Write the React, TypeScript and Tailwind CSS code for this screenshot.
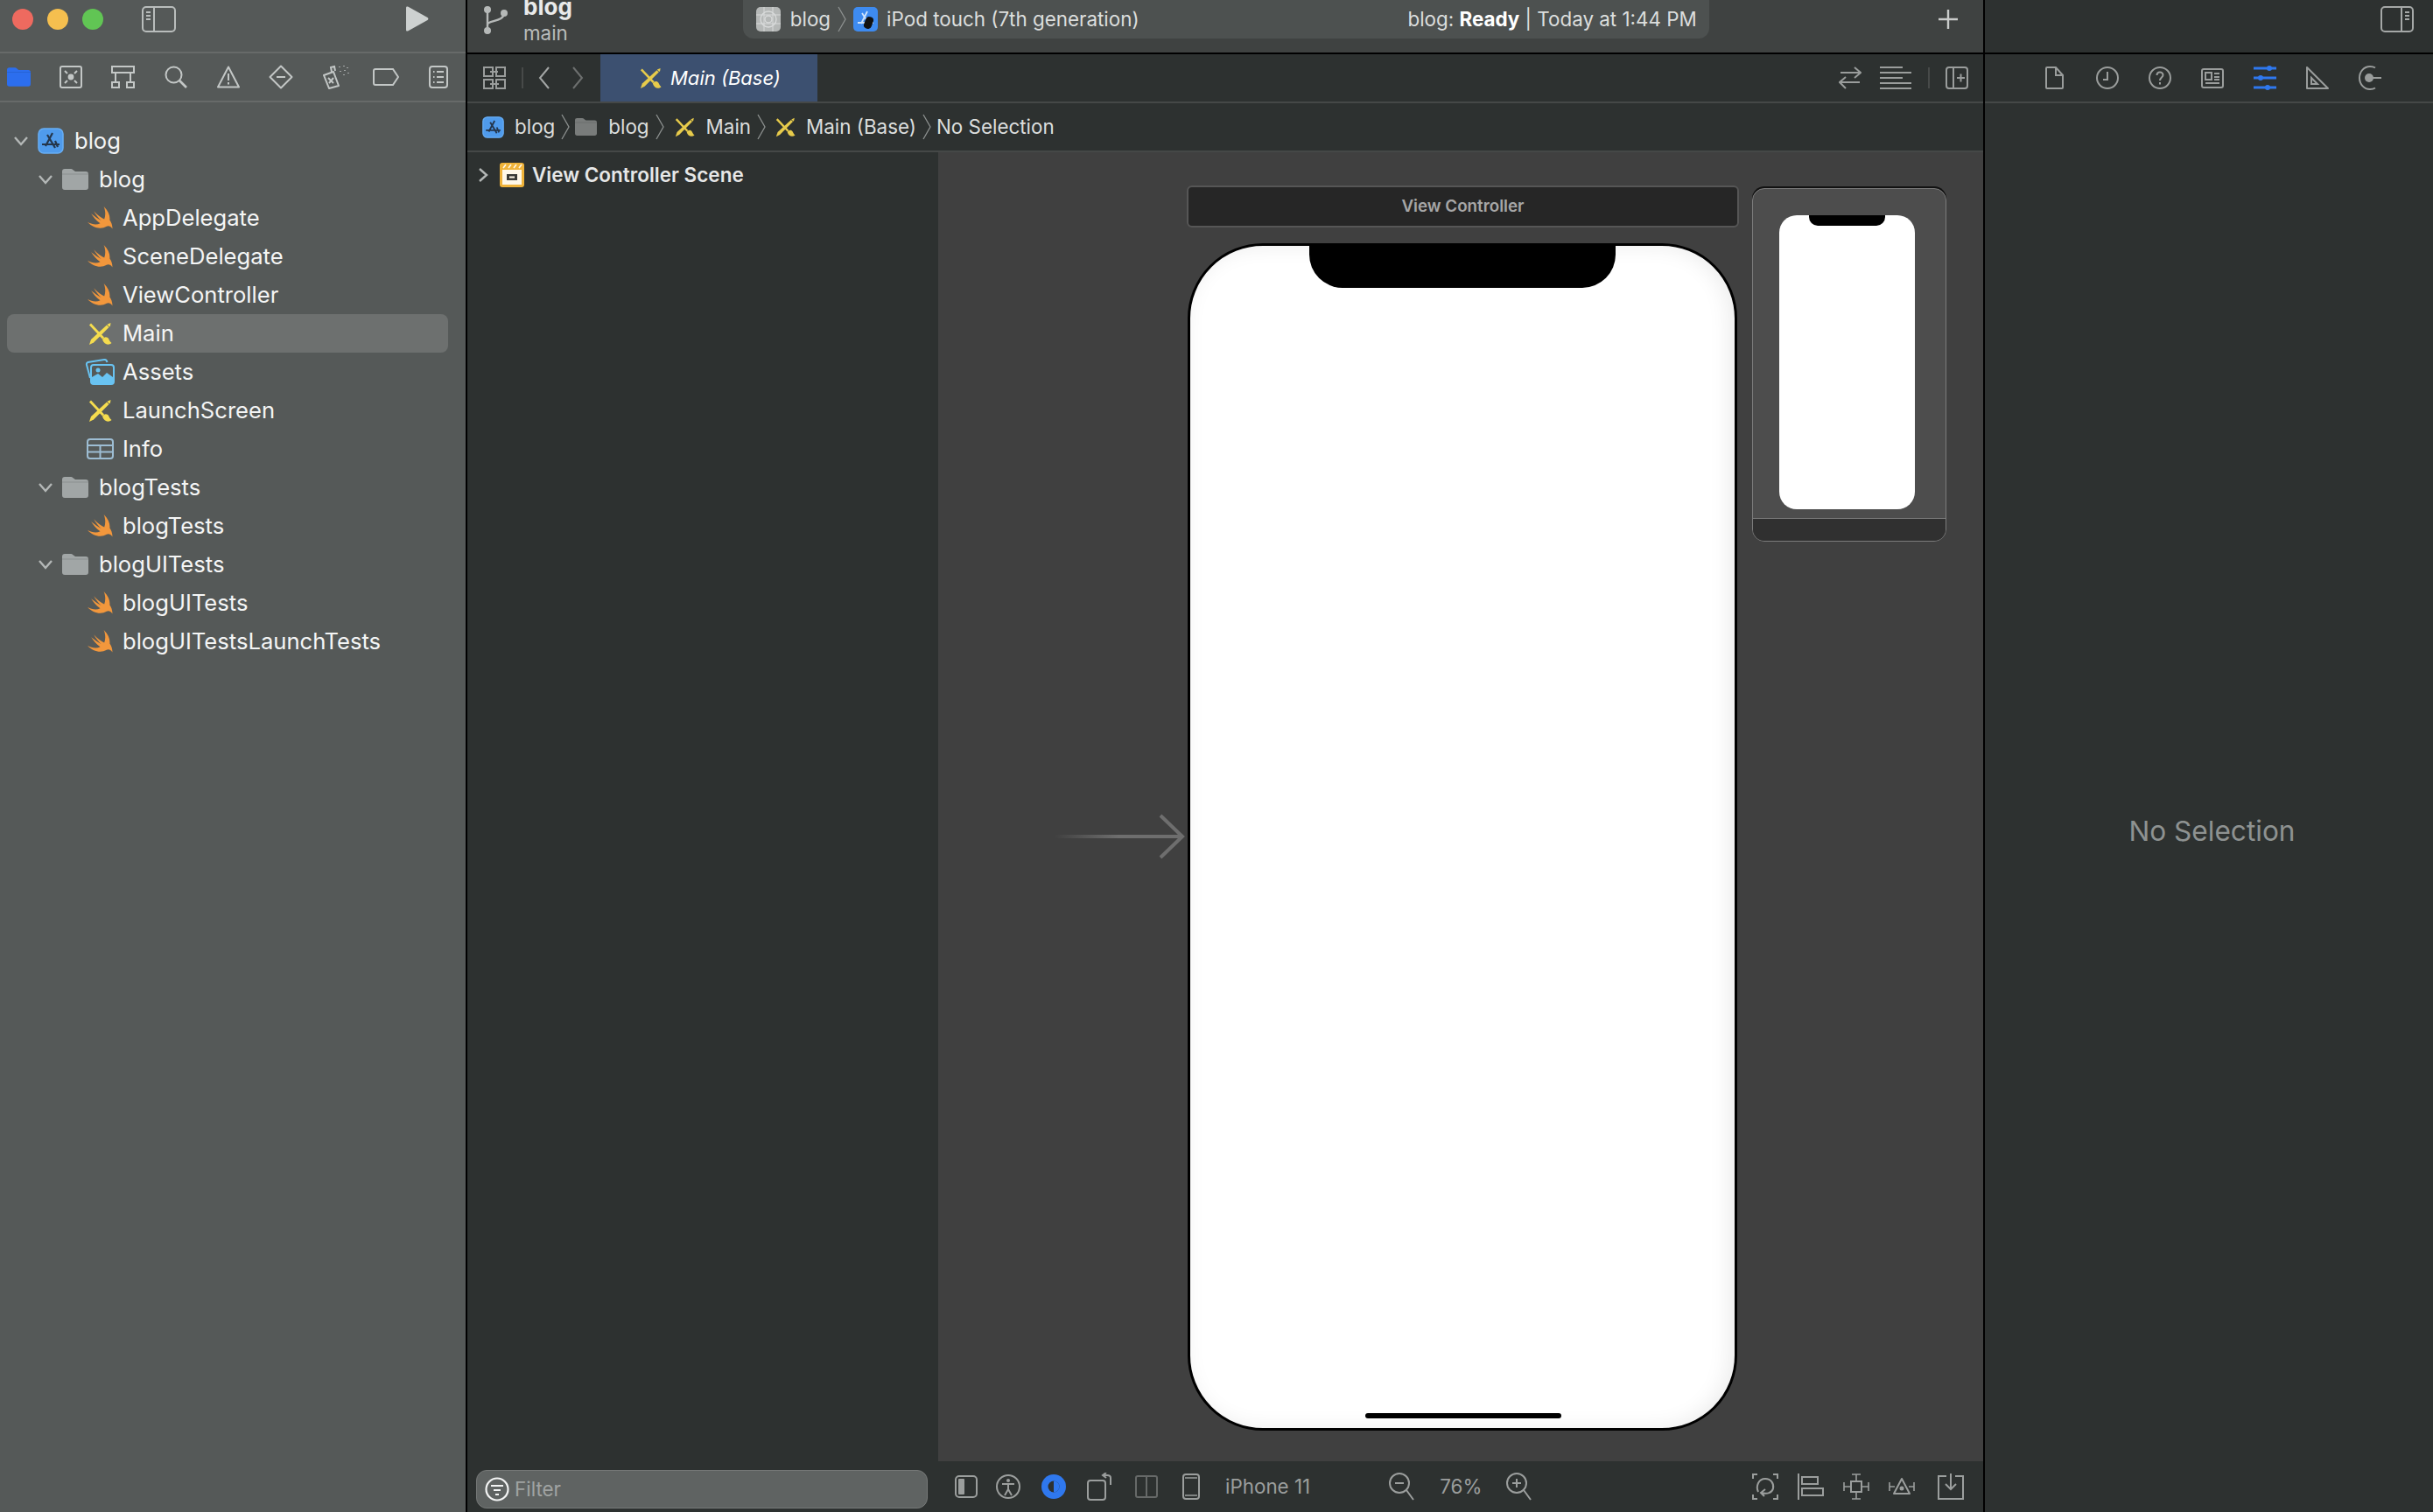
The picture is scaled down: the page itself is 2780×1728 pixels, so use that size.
import type { ReactNode } from "react";

function Ic({ w, h, children, className = "" }: { w: number; h: number; children: ReactNode; className?: string }) {
  return (
    <svg width={w} height={h} viewBox={`0 0 ${w} ${h}`} fill="none" stroke="currentColor" strokeWidth={2} className={`shrink-0 ${className}`}>
      {children}
    </svg>
  );
}

const SwiftIcon = () => (
  <svg width={29} height={26} viewBox="0 0 28 25" className="shrink-0">
    <path
      fill="#f2973c"
      d="M18 0C23 5 25 10 24.5 15C26 17 27.5 20 27.5 24.5C25.5 21.5 23 21 21 22C15 25.5 6 24 0 17C5 20 10 20.5 14 18.5C9.5 15.5 6.5 11.5 4 8C8 11 12 14 15 15.5C12 12.5 9 9 7 5C11 9.5 15 12.5 18.5 14C20 10 20 5 18 0Z"
    />
  </svg>
);

const BoardIcon = ({ color = "#f5dc4e", size = 27 }: { color?: string; size?: number }) => (
  <svg width={size} height={size} viewBox="0 0 27 27" className="shrink-0">
    <path d="M1 26L3 20L21 3.500L23.500 6L6 23.500Z" fill={color} />
    <path d="M22 2.500L25.500 1L25 4.500L24 5.500L21.500 3Z" fill={color} />
    <path d="M2 2.500L17 18.500" stroke={color} strokeWidth="2.800" />
    <path d="M16 20C18 16 22 17 23 19C24 21 25 23 26.500 24C23 27 18 26 16 20Z" fill={color} />
  </svg>
);

const AppIcon = ({ size = 30 }: { size?: number }) => (
  <svg width={size} height={size} viewBox="0 0 30 30" className="shrink-0">
    <rect x="1" y="1" width="28" height="28" rx="6" fill="#4f9bec" stroke="#67aef5" strokeWidth="1.500" />
    <path d="M11 8L20 23M17 6L9 21M5 19H25M20 15L23 22" stroke="#24364c" strokeWidth="2.200" fill="none" />
  </svg>
);

const FolderIcon = ({ color = "#a1a6a6", w = 30, h = 24 }: { color?: string; w?: number; h?: number }) => (
  <svg width={w} height={h} viewBox="0 0 30 24" className="shrink-0">
    <path
      fill={color}
      d="M0 3C0 1 1 0 3 0H10C12 0 13 2 15 3H27C29 3 30 4 30 6V21C30 23 29 24 27 24H3C1 24 0 23 0 21Z"
    />
    <path d="M0 6H30" stroke="#00000020" strokeWidth="1" />
  </svg>
);

const AssetsIcon = () => (
  <svg width={34} height={30} viewBox="0 0 34 30" fill="none" className="shrink-0">
    <path d="M6 22L2 7C1.600 5.500 2.400 4.500 3.500 4L22 1C24 .8 25 2 25.500 4" stroke="#69c3f2" strokeWidth="2" />
    <rect x="7" y="7" width="26" height="22" rx="3" stroke="#69c3f2" strokeWidth="2" />
    <path d="M8 28V21L15 17L20 21L25 16L32 21V28Z" fill="#69c3f2" />
    <circle cx="15" cy="13" r="2.500" fill="#69c3f2" />
  </svg>
);

const TableIcon = () => (
  <svg width={31} height={24} viewBox="0 0 31 24" fill="none" stroke="#9dbdd3" strokeWidth="2" className="shrink-0">
    <rect x="1" y="1" width="29" height="22" rx="3" />
    <path d="M1 8H30M1 15.500H30M15.500 8V23" />
  </svg>
);

const Chevron = ({ open }: { open: boolean }) => (
  <svg width={18} height={12} viewBox="0 0 18 12" fill="none" stroke="#b4b8b7" strokeWidth="2.400" className={`shrink-0 ${open ? "" : "-rotate-90"}`}>
    <path d="M2 2L9 10L16 2" />
  </svg>
);

const Crumb = () => (
  <svg width={12} height={30} viewBox="0 0 12 30" fill="none" stroke="#8d9190" strokeWidth="1.300" className="shrink-0">
    <path d="M2 1L10 15L2 29" />
  </svg>
);

type TreeRow = { label: string; level: 0 | 1 | 2; icon: ReactNode; selected?: boolean };

const tree: TreeRow[] = [
  { label: "blog", level: 0, icon: <AppIcon /> },
  { label: "blog", level: 1, icon: <FolderIcon /> },
  { label: "AppDelegate", level: 2, icon: <SwiftIcon /> },
  { label: "SceneDelegate", level: 2, icon: <SwiftIcon /> },
  { label: "ViewController", level: 2, icon: <SwiftIcon /> },
  { label: "Main", level: 2, icon: <BoardIcon />, selected: true },
  { label: "Assets", level: 2, icon: <AssetsIcon /> },
  { label: "LaunchScreen", level: 2, icon: <BoardIcon /> },
  { label: "Info", level: 2, icon: <TableIcon /> },
  { label: "blogTests", level: 1, icon: <FolderIcon /> },
  { label: "blogTests", level: 2, icon: <SwiftIcon /> },
  { label: "blogUITests", level: 1, icon: <FolderIcon /> },
  { label: "blogUITests", level: 2, icon: <SwiftIcon /> },
  { label: "blogUITestsLaunchTests", level: 2, icon: <SwiftIcon /> },
];

function Row({ row }: { row: TreeRow }) {
  return (
    <div className={`flex h-[44px] items-center rounded-lg ${row.selected ? "mx-[8px] w-[504px] bg-[#6d706f] pl-[90px]" : "w-[520px]"} ${
      row.selected ? "" : row.level === 2 ? "pl-[98px]" : row.level === 1 ? "pl-[43px]" : "pl-[15px]"
    }`}>
      {row.level < 2 && <Chevron open />}
      <span className={`flex h-[30px] items-center justify-center ${row.level === 2 ? "w-[32px]" : "ml-[10px] w-[30px]"}`}>
        {row.icon}
      </span>
      <span className={`text-[25.6px] leading-none text-[#f4f5f5] ${row.level === 2 ? "ml-[10px]" : "ml-[12px]"}`}>
        {row.label}
      </span>
    </div>
  );
}

const navIcons: ReactNode[] = [
  <FolderIcon color="#2c6eee" w={27} h={22} />,
  <Ic w={26} h={26}>
    <rect x="1" y="1" width="24" height="24" rx="2" />
    <circle cx="13" cy="13" r="3.400" fill="currentColor" stroke="none" />
    <path d="M6 6L9 9M20 6L17 9M6 20L9 17M20 20L17 17" />
  </Ic>,
  <Ic w={28} h={26}>
    <rect x="1" y="1" width="25" height="7" />
    <rect x="1" y="19" width="8" height="6" />
    <rect x="18" y="19" width="8" height="6" />
    <path d="M5 8V19M22 8V19" />
  </Ic>,
  <Ic w={26} h={26}>
    <circle cx="10.500" cy="10.500" r="9" />
    <path d="M17 17L25 25" strokeWidth="2.600" />
  </Ic>,
  <Ic w={26} h={26}>
    <path d="M13 1.500L25 24.500H1Z" strokeLinejoin="round" />
    <path d="M13 9V17M13 19V21.500" />
  </Ic>,
  <Ic w={28} h={28}>
    <path d="M14 1.500L26.500 14L14 26.500L1.500 14Z" strokeLinejoin="round" />
    <path d="M9 14H19" />
  </Ic>,
  <Ic w={32} h={28} className="translate-x-[3px]">
    <path d="M2 12L13 8L19 24L8 27Z" strokeLinejoin="round" />
    <path d="M11 8L10 3L14 2L15 7M7 15L13 21M13 15L8 21" />
    <path d="M20 2V3M25 1V2M29 3V4M21 7V8M26 6V7M30 9V10M25 11V12" strokeWidth="1.400" />
  </Ic>,
  <Ic w={30} h={20}>
    <path d="M3 1H23L29 10L23 19H3C1.500 19 1 18 1 17V3C1 2 1.500 1 3 1Z" />
  </Ic>,
  <Ic w={22} h={26}>
    <rect x="1" y="1" width="20" height="24" rx="3" />
    <path d="M5 7H6.500M9 7H17M5 13H6.500M9 13H17M5 19H6.500M9 19H17" />
  </Ic>,
];

const inspectorIcons: ReactNode[] = [
  <Ic w={22} h={26}>
    <path d="M2 1H12L20 10V24C20 24.500 19.500 25 19 25H2C1.500 25 1 24.500 1 24V2C1 1.500 1.500 1 2 1Z" />
    <path d="M12 1V10H20" />
  </Ic>,
  <Ic w={26} h={26}>
    <circle cx="13" cy="13" r="12" />
    <path d="M13 6V15H8" />
  </Ic>,
  <Ic w={26} h={26}>
    <circle cx="13" cy="13" r="12" />
    <path d="M9.500 10C9.500 7.500 11 6.500 13 6.500C15 6.500 16.500 8 16.500 9.700C16.500 12.500 13 12.500 13 16M13 18V20.500" />
  </Ic>,
  <Ic w={26} h={26}>
    <rect x="1" y="3" width="24" height="21" rx="2" />
    <rect x="5" y="7" width="7" height="8" />
    <path d="M15 8H21M15 12H21M15 15H21M5 19H21" />
  </Ic>,
  <Ic w={28} h={28} className="text-[#2f78ee]">
    <path d="M1 3H27M1 14H27M1 25H27" strokeWidth="3" />
    <circle cx="19" cy="3" r="3" fill="currentColor" stroke="none" />
    <circle cx="9" cy="14" r="3" fill="currentColor" stroke="none" />
    <circle cx="17" cy="25" r="3" fill="currentColor" stroke="none" />
  </Ic>,
  <Ic w={26} h={26}>
    <path d="M1 1V25H25Z" strokeLinejoin="round" />
    <path d="M6 13V20H13Z" />
  </Ic>,
  <Ic w={28} h={28}>
    <path d="M20 2.500C18.500 1.500 16 1 14 1C7 1 2 7 2 14C2 21 7 27 14 27C16 27 18.500 26.500 20 25.500" />
    <circle cx="13" cy="14" r="5" fill="currentColor" stroke="none" />
    <path d="M15 14H27" />
  </Ic>,
];

function App() {
  return (
    <div className="flex h-[1728px] w-[2780px] overflow-hidden bg-black font-['Inter',sans-serif]">
      {/* Navigator */}
      <aside className="flex w-[534px] shrink-0 flex-col border-r-2 border-black bg-[#555958]">
        <div className="flex h-[61px] items-start border-b-2 border-[#676a69] pl-[14px] pt-[10px]">
          <span className="h-[24px] w-[24px] rounded-full bg-[#ee6a5f]" />
          <span className="ml-[16px] h-[24px] w-[24px] rounded-full bg-[#f5bf4f]" />
          <span className="ml-[16px] h-[24px] w-[24px] rounded-full bg-[#61c554]" />
          <Ic w={40} h={30} className="ml-[44px] -mt-[3px] text-[#b9bdbc]">
            <rect x="1" y="1" width="37" height="28" rx="4" />
            <path d="M14 1V29M5 7H10M5 11H10M5 15H10" />
          </Ic>
          <svg width={27} height={29} viewBox="0 0 27 29" className="ml-[261px] -mt-[3px]">
            <path d="M1 2C1 .5 2 0 3.500 .8L25.500 13C26.700 13.800 26.700 15.200 25.500 16L3.500 28.200C2 29 1 28.500 1 27Z" fill="#cdd1d0" />
          </svg>
        </div>
        <div className="flex h-[56px] items-center border-b-2 border-[#676a69] text-[#c3c7c6]">
          {navIcons.map((icon, i) => (
            <span key={i} className="flex w-[60px] shrink-0 -translate-x-[9px] items-center justify-center">
              {icon}
            </span>
          ))}
        </div>
        <div className="pt-[22px]">
          {tree.map((row, i) => (
            <Row key={i} row={row} />
          ))}
        </div>
      </aside>

      {/* Editor */}
      <main className="flex min-w-0 flex-1 flex-col">
        <div className="flex h-[60px] shrink-0 items-start bg-[#3f4241]">
          <Ic w={28} h={34} className="ml-[18px] mt-[6px] text-[#b6b9b8]">
            <circle cx="5" cy="5" r="3" fill="currentColor" />
            <circle cx="5" cy="29" r="3" fill="currentColor" />
            <circle cx="24" cy="9" r="3" fill="currentColor" />
            <path d="M5 5V29M5 22C5 17 24 19 24 9" strokeWidth="2.400" />
          </Ic>
          <div className="ml-[18px] -mt-[9px] flex flex-col">
            <span className="text-[26px] font-bold leading-[34px] text-[#e9eaea]">blog</span>
            <span className="text-[22.4px] leading-[25px] text-[#b9bcbb]">main</span>
          </div>
          <div className="ml-[195px] flex h-[44px] w-[1104px] items-center rounded-b-xl bg-[#4d5150] pl-[15px] text-[22.4px] text-[#dcdedd]">
            <svg width={28} height={28} viewBox="0 0 28 28" className="shrink-0">
              <rect width="28" height="28" rx="5" fill="#b5b8b7" />
              <circle cx="14" cy="14" r="9" fill="none" stroke="#d8dada" strokeWidth="1.400" />
              <circle cx="14" cy="14" r="4" fill="none" stroke="#d8dada" strokeWidth="1.400" />
              <path d="M0 9H28M0 19H28M9 0V28M19 0V28" stroke="#d8dada" strokeWidth="1" />
            </svg>
            <span className="ml-[11px]">blog</span>
            <span className="ml-[7px]"><Crumb /></span>
            <span className="relative ml-[7px] flex h-[28px] w-[28px] items-center justify-center">
              <svg width={28} height={28} viewBox="0 0 28 28">
                <rect width="28" height="28" rx="5" fill="#3e8bf0" />
                <path d="M10 7L19 21M16 5L9 19M5 18H23" stroke="#cfe3fb" strokeWidth="1.800" fill="none" />
              </svg>
              <span className="absolute left-[13px] top-[11px] h-[14px] w-[9px] rotate-[20deg] rounded-sm bg-[#111]" />
            </span>
            <span className="ml-[10px] whitespace-nowrap">iPod touch (7th generation)</span>
            <span className="ml-auto mr-[14px] whitespace-nowrap">
              blog: <b className="font-bold text-white">Ready</b> | Today at 1:44 PM
            </span>
          </div>
          <svg width={24} height={24} viewBox="0 0 24 24" fill="none" stroke="#c9cbca" strokeWidth="2.400" className="ml-[261px] mt-[10px]">
            <path d="M12 1V23M1 12H23" />
          </svg>
        </div>
        <div className="h-[2px] shrink-0 bg-black" />

        <div className="flex h-[54px] shrink-0 items-center bg-[#2d3130]">
          <Ic w={26} h={26} className="ml-[18px] text-[#9a9d9c]">
            <path d="M1 1H11V11H1ZM15 1H25V11H15ZM1 15H11V25H1ZM15 15H25V25H15Z" />
            <path d="M8 6H17M18 20H8" />
          </Ic>
          <span className="ml-[18px] h-[24px] w-[2px] bg-[#474a49]" />
          <svg width={14} height={26} viewBox="0 0 14 26" fill="none" stroke="#a3a6a5" strokeWidth="2" className="ml-[17px]">
            <path d="M12 1L2 13L12 25" />
          </svg>
          <svg width={14} height={26} viewBox="0 0 14 26" fill="none" stroke="#6d706f" strokeWidth="2" className="ml-[24px]">
            <path d="M2 1L12 13L2 25" />
          </svg>
          <div className="ml-[19px] flex h-full w-[248px] items-center bg-[#3c5070] pl-[45px]">
            <BoardIcon color="#e7cb4b" size={25} />
            <span className="ml-[10px] whitespace-nowrap text-[22px] italic leading-none text-white">Main (Base)</span>
          </div>
          <Ic w={26} h={26} className="ml-auto text-[#9a9d9c]">
            <path d="M2 7H25M18 1L25 7L18 13M24 18H1M8 12L1 18L8 25" />
          </Ic>
          <Ic w={36} h={26} className="ml-[21px] text-[#9a9d9c]">
            <path d="M0 1H26M0 7H36M0 13H26M0 19H36M0 25H36" />
          </Ic>
          <span className="ml-[19px] h-[24px] w-[2px] bg-[#474a49]" />
          <Ic w={26} h={26} className="ml-[18px] mr-[17px] text-[#9a9d9c]">
            <rect x="1" y="1" width="24" height="24" rx="3" />
            <path d="M9 1V25M13 13H22M17.500 8.500V17.500" />
          </Ic>
        </div>
        <div className="h-[2px] shrink-0 bg-[#454847]" />

        <div className="flex h-[54px] shrink-0 items-center whitespace-nowrap bg-[#2d3130] pl-[17px] text-[22.4px] text-[#dcdedd]">
          <AppIcon size={25} />
          <span className="ml-[12px]">blog</span>
          <span className="ml-[6px]"><Crumb /></span>
          <span className="ml-[5px]"><FolderIcon color="#797c7b" w={25} h={20} /></span>
          <span className="ml-[13px]">blog</span>
          <span className="ml-[6px]"><Crumb /></span>
          <span className="ml-[11px]"><BoardIcon color="#e7cb4b" size={23} /></span>
          <span className="ml-[13px]">Main</span>
          <span className="ml-[6px]"><Crumb /></span>
          <span className="ml-[10px]"><BoardIcon color="#e7cb4b" size={23} /></span>
          <span className="ml-[12px]">Main (Base)</span>
          <span className="ml-[6px]"><Crumb /></span>
          <span className="ml-[5px]">No Selection</span>
        </div>
        <div className="h-[2px] shrink-0 bg-[#454847]" />

        <div className="flex min-h-0 flex-1">
          {/* Document outline */}
          <div className="flex w-[538px] shrink-0 flex-col bg-[#2d3130]">
            <div className="flex h-[52px] items-center pl-[9px]">
              <Chevron open={false} />
              <svg width={28} height={28} viewBox="0 0 28 28" className="ml-[10px] shrink-0">
                <rect width="28" height="28" rx="3" fill="#efb33a" />
                <rect x="3" y="8" width="22" height="17" fill="#fff8e8" />
                <rect x="8" y="13" width="12" height="7" fill="#3a3a36" />
                <rect x="11" y="15.500" width="6" height="2" fill="#fff8e8" />
                <path d="M4 6L7 2M10 6L13 2M16 6L19 2M22 6L25 2" stroke="#fff8e8" strokeWidth="1.600" />
              </svg>
              <span className="ml-[9px] whitespace-nowrap text-[22.5px] font-semibold leading-none text-[#e6e7e7]">View Controller Scene</span>
            </div>
            <div className="mt-auto mb-[4px] ml-[10px] flex h-[44px] w-[516px] items-center rounded-xl border border-[#757877] bg-[#5f6362] pl-[9px]">
              <svg width={28} height={28} viewBox="0 0 28 28" fill="none" stroke="#f3f4f4" strokeWidth="2.200" className="shrink-0">
                <circle cx="14" cy="14" r="12.500" />
                <path d="M7 10H21M10 15H18M12 20H16" />
              </svg>
              <span className="ml-[6px] text-[22.4px] leading-none text-[#a0a3a2]">Filter</span>
            </div>
          </div>

          {/* Canvas */}
          <div className="flex min-w-0 flex-1 flex-col">
            <div className="relative flex-1 bg-[#404040]">
              <div className="absolute left-[284px] top-[38px] flex h-[48px] w-[631px] items-center justify-center rounded-md border-2 border-[#565656] bg-[#262626] text-[18.8px] font-semibold text-[#a6a6a6]">
                View Controller
              </div>
              <div className="absolute left-[285px] top-[104px] h-[1357px] w-[628px] rounded-[86px] border-[3px] border-black bg-white shadow-[inset_-6px_0_24px_rgba(0,0,0,0.08)]">
                <div className="absolute left-[136px] top-[-3px] h-[51px] w-[350px] rounded-b-[38px] bg-black" />
                <div className="absolute bottom-[11px] left-[200px] h-[6px] w-[224px] rounded-full bg-black" />
              </div>

              {/* Scene overview */}
              <div className="absolute left-[930px] top-[41px] flex h-[404px] w-[222px] flex-col overflow-hidden rounded-[14px] border border-[#7c7c7c] bg-[#4d4d4d] shadow-[0_-2px_0_#111]">
                <div className="relative ml-[30px] mt-[30px] h-[336px] w-[155px] rounded-[20px] bg-white">
                  <div className="absolute left-[34px] top-0 h-[12px] w-[87px] rounded-b-[10px] bg-black" />
                </div>
                <div className="mt-[10px] flex-1 border-t border-[#797979] bg-[#303030]" />
              </div>

              {/* Initial view controller arrow */}
              <svg width={150} height={52} viewBox="0 0 150 52" fill="none" className="absolute left-[133px] top-[756px]">
                <defs>
                  <linearGradient id="entry" x1="0" x2="1">
                    <stop offset="0" stopColor="#6e6e6e" stopOpacity="0" />
                    <stop offset="0.5" stopColor="#6e6e6e" />
                  </linearGradient>
                </defs>
                <rect x="0" y="24" width="147" height="4" fill="url(#entry)" />
                <path d="M121 2L146 26L121 50" stroke="#6e6e6e" strokeWidth="4" />
              </svg>
            </div>
            <div className="flex h-[58px] shrink-0 items-center bg-[#2d3130] text-[#9b9e9d]">
              <Ic w={26} h={26} className="ml-[19px]">
                <rect x="1" y="1" width="24" height="24" rx="4" />
                <rect x="4" y="4" width="7" height="18" rx="1" fill="currentColor" stroke="none" />
              </Ic>
              <Ic w={28} h={28} className="ml-[21px]">
                <circle cx="14" cy="14" r="13" />
                <circle cx="14" cy="7" r="2" fill="currentColor" stroke="none" />
                <path d="M7 11H21M14 11V17M14 17L10 24M14 17L18 24" />
              </Ic>
              <svg width={28} height={28} viewBox="0 0 28 28" className="ml-[24px] shrink-0">
                <circle cx="14" cy="14" r="14" fill="#2f78ee" />
                <circle cx="14" cy="14" r="6.500" fill="#2d3130" />
                <path d="M14 7.500A6.500 6.500 0 0 1 14 20.500Z" fill="#2f78ee" />
              </svg>
              <Ic w={30} h={32} className="ml-[24px]">
                <rect x="1" y="9" width="20" height="22" rx="3" />
                <path d="M27 14V6C27 4 25 3 23 3H19M22 0L18 3L22 6" />
              </Ic>
              <Ic w={26} h={26} className="ml-[25px] text-[#666968]">
                <rect x="1" y="1" width="24" height="24" rx="2" />
                <path d="M13 1V25" />
              </Ic>
              <Ic w={20} h={30} className="ml-[28px]">
                <rect x="1" y="1" width="18" height="28" rx="3" />
                <path d="M3 5H17M3 25H17" strokeWidth="1.500" />
              </Ic>
              <span className="ml-[29px] whitespace-nowrap text-[22.4px] leading-none">iPhone 11</span>
              <Ic w={30} h={32} className="ml-[90px]">
                <circle cx="12" cy="12" r="11" />
                <path d="M20 20L28 31M7 12H17" />
              </Ic>
              <span className="ml-[28px] text-[22.4px] leading-none">76%</span>
              <Ic w={30} h={32} className="ml-[28px]">
                <circle cx="12" cy="12" r="11" />
                <path d="M20 20L28 31M7 12H17M12 7V17" />
              </Ic>
              <Ic w={30} h={30} className="ml-auto">
                <path d="M1 6V1H6M24 1H29V6M1 24V29H6M24 29H29V24" />
                <path d="M7 21C4 15 7 6 15 6C22 6 25 12 24 17C23 22 17 24 11 22M15 18L10 22L14 26" />
              </Ic>
              <Ic w={30} h={30} className="ml-[22px]">
                <path d="M1 0V30" />
                <rect x="5" y="4" width="18" height="8" />
                <rect x="5" y="17" width="24" height="8" />
              </Ic>
              <Ic w={30} h={30} className="ml-[22px]">
                <rect x="9" y="9" width="12" height="12" />
                <path d="M10 1H20M15 1V9M10 29H20M15 29V21M1 10V20M1 15H9M29 10V20M29 15H21" strokeWidth="1.600" />
              </Ic>
              <Ic w={30} h={26} className="ml-[22px]">
                <path d="M15 4L24 21H6Z" strokeLinejoin="round" />
                <circle cx="15" cy="15" r="2.500" fill="currentColor" stroke="none" />
                <path d="M1 8V18M1 13H7M29 8V18M29 13H23" strokeWidth="1.600" />
              </Ic>
              <Ic w={30} h={30} className="ml-[26px] mr-[22px]">
                <path d="M10 3H1V29H29V3H20" />
                <path d="M15 0V18M9 12L15 18L21 12" />
              </Ic>
            </div>
          </div>
        </div>
      </main>

      {/* Inspector */}
      <aside className="flex w-[514px] shrink-0 flex-col border-l-2 border-black bg-[#2d3130]">
        <div className="flex h-[60px] shrink-0 items-start justify-end pr-[22px] pt-[7px]">
          <Ic w={38} h={30} className="text-[#a5a8a7]">
            <rect x="1" y="1" width="36" height="28" rx="4" />
            <path d="M24 1V29M28 7H33M28 11H33M28 15H33" />
          </Ic>
        </div>
        <div className="h-[2px] shrink-0 bg-black" />
        <div className="flex h-[54px] shrink-0 items-center pl-[50px] text-[#9a9d9c]">
          {inspectorIcons.map((icon, i) => (
            <span key={i} className="flex w-[60px] shrink-0 items-center justify-center">
              {icon}
            </span>
          ))}
        </div>
        <div className="h-[2px] shrink-0 bg-[#454847]" />
        <div className="flex flex-1 items-start justify-center pt-[812px] pl-[7px] text-[31.6px] leading-[40px] text-[#8e9291]">
          No Selection
        </div>
      </aside>
    </div>
  );
}

export default App;
